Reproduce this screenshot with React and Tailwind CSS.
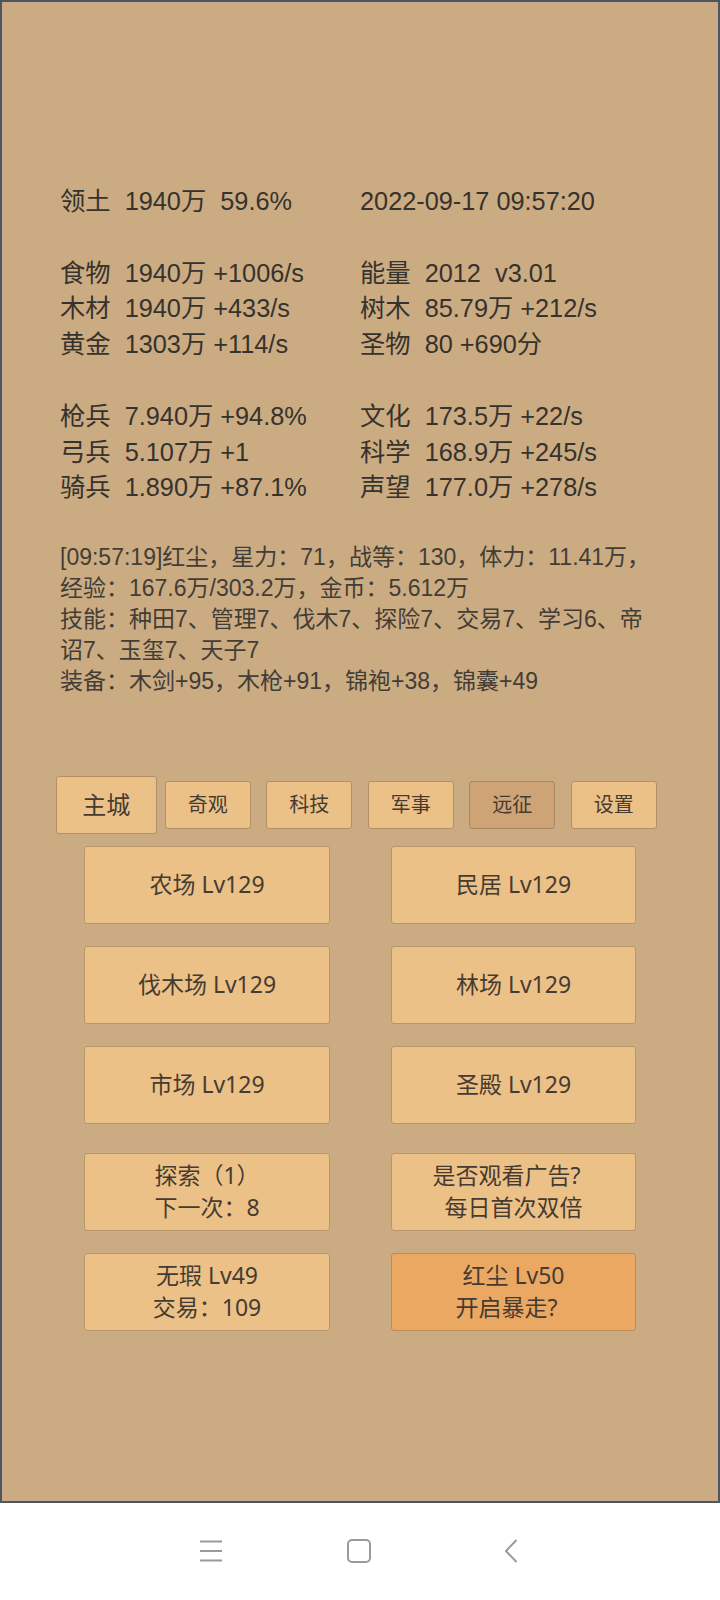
const stats = [
  ['领土  1940万  59.6%', '2022-09-17 09:57:20'],
  ['', ''],
  ['食物  1940万 +1006/s', '能量  2012  v3.01'],
  ['木材  1940万 +433/s', '树木  85.79万 +212/s'],
  ['黄金  1303万 +114/s', '圣物  80 +690分'],
  ['', ''],
  ['枪兵  7.940万 +94.8%', '文化  173.5万 +22/s'],
  ['弓兵  5.107万 +1', '科学  168.9万 +245/s'],
  ['骑兵  1.890万 +87.1%', '声望  177.0万 +278/s'],
];

const log = [
  '[09:57:19]红尘，星力：71，战等：130，体力：11.41万，',
  '经验：167.6万/303.2万，金币：5.612万',
  '技能：种田7、管理7、伐木7、探险7、交易7、学习6、帝',
  '诏7、玉玺7、天子7',
  '装备：木剑+95，木枪+91，锦袍+38，锦囊+49',
];

const tabs = ['主城', '奇观', '科技', '军事', '远征', '设置'];

const buildings = ['农场 Lv129', '民居 Lv129', '伐木场 Lv129', '林场 Lv129', '市场 Lv129', '圣殿 Lv129'];

function Tab({ label, index }) {
  if (index === 0) {
    return (
      <div className="flex h-[58px] w-full items-center justify-center rounded-[3px] border border-[#b38f66] bg-[#ecc188] text-[24px] text-[#463b31]">
        {label}
      </div>
    );
  }
  const bg = index === 4 ? 'bg-[#cea375] border-[#ab8660]' : 'bg-[#ecc188] border-[#b38f66]';
  return (
    <div className={`flex h-[48px] w-[86px] items-center justify-center justify-self-center rounded-[3px] border text-[20px] text-[#463b31] ${bg}`}>
      {label}
    </div>
  );
}

function Btn({ children, orange }) {
  return (
    <div
      className={`flex h-[78px] flex-col items-center justify-center rounded-[3px] border text-[23px] leading-[31.6px] text-[#463b31] ${
        orange ? 'border-[#c08b57] bg-[#eba862]' : 'border-[#b8966c] bg-[#ecc188]'
      }`}
    >
      {children}
    </div>
  );
}

export default function App() {
  return (
    <div className="w-[720px] h-[1600px] bg-white" style={{ fontFamily: '"Liberation Sans", "Noto Sans CJK SC", sans-serif' }}>
      <div className="flex h-[1503px] flex-col border-2 border-[#4d5563] bg-[#cbab82]">
        {/* stats */}
        <div className="mt-[182px] grid grid-cols-[300px_300px] pl-[58px] text-[25.3px] leading-[35.8px] text-[#36322e]">
          {stats.map(([l, r], i) => (
            <div key={i} className="contents">
              <div className="h-[35.8px] whitespace-pre">{l}</div>
              <div className="h-[35.8px] whitespace-pre">{r}</div>
            </div>
          ))}
        </div>

        {/* log */}
        <div className="mt-[36px] pl-[58px] text-[23px] leading-[30.9px] text-[#423d37]">
          {log.map((line, i) => (
            <div key={i} className="whitespace-nowrap">{line}</div>
          ))}
        </div>

        {/* tabs + buttons */}
        <div style={{ fontFamily: '"Noto Sans", "Noto Sans CJK SC", sans-serif' }}>
          <div className="ml-[53.5px] mt-[79px] grid h-[58px] w-[609px] grid-cols-6 items-center">
            {tabs.map((t, i) => (
              <Tab key={t} label={t} index={i} />
            ))}
          </div>

          <div className="ml-[82px] mt-[12px] grid grid-cols-[246px_245px] gap-x-[61px] gap-y-[22px]">
            {buildings.map((b) => (
              <Btn key={b}>{b}</Btn>
            ))}
          </div>

          <div className="ml-[82px] mt-[29px] grid grid-cols-[246px_245px] gap-x-[61px] gap-y-[22px]">
            <Btn>
              <span>探索（1）</span>
              <span>下一次：8</span>
            </Btn>
            <Btn>
              <span className="mr-[14px]">是否观看广告?</span>
              <span>每日首次双倍</span>
            </Btn>
            <Btn>
              <span>无瑕 Lv49</span>
              <span>交易：109</span>
            </Btn>
            <Btn orange>
              <span>红尘 Lv50</span>
              <span className="mr-[14px]">开启暴走?</span>
            </Btn>
          </div>
        </div>
      </div>

      {/* system nav bar */}
      <div className="flex h-[97px] items-center pb-[1px] pl-[200px]">
        <svg width="22" height="24" viewBox="0 0 22 24" fill="none" stroke="#9a9a9a" strokeWidth="2">
          <path d="M0 2.5h22M0 12h22M0 21.5h22" />
        </svg>
        <svg className="ml-[125px]" width="24" height="24" viewBox="0 0 24 24" fill="none" stroke="#9a9a9a" strokeWidth="2">
          <rect x="1" y="1" width="22" height="22" rx="4" />
        </svg>
        <svg className="ml-[133px]" width="14" height="24" viewBox="0 0 14 24" fill="none" stroke="#9a9a9a" strokeWidth="2">
          <path d="M12.5 1L2 12l10.5 11" />
        </svg>
      </div>
    </div>
  );
}
